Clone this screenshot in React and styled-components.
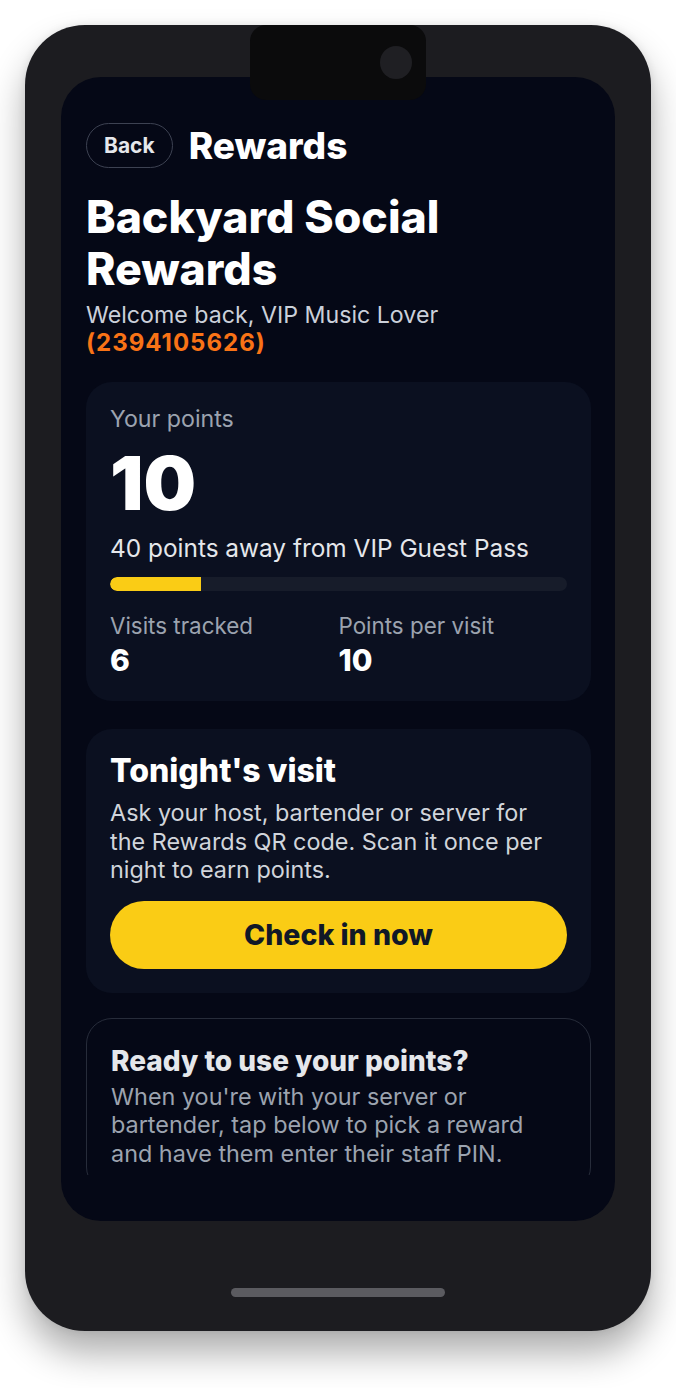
import React from "react"
import styled, { createGlobalStyle } from "styled-components"

const GlobalStyle = createGlobalStyle`
  html, body {
    margin: 0;
    padding: 0;
    background: #ffffff;
  }
  body {
    font-family: Inter, "Noto Sans", "Liberation Sans", sans-serif;
  }
  * {
    box-sizing: border-box;
  }
`

const Stage = styled.div`
  width: 676px;
  height: 1388px;
  padding: 25px;
`
const Frame = styled.div`
  position: relative;
  width: 626px;
  height: 1306px;
  background: #1c1c20;
  border-radius: 60px;
  padding: 52px 36px 0;
  display: flex;
  flex-direction: column;
  box-shadow: 0 22px 36px rgba(0, 0, 0, 0.32), 0 0 8px rgba(0, 0, 0, 0.08);
`
const Notch = styled.div`
  position: absolute;
  top: 0;
  left: 225px;
  width: 176px;
  height: 75px;
  background: #0b0b0c;
  border-radius: 16px;
  z-index: 2;
`
const Camera = styled.div`
  position: absolute;
  top: 21px;
  right: 14px;
  width: 32px;
  height: 33px;
  border-radius: 50%;
  background: #1f1f23;
`
const Screen = styled.div`
  height: 1144px;
  background: #050816;
  border-radius: 40px;
  padding-bottom: 46px;
  display: flex;
  flex-direction: column;
  overflow: hidden;
`
const Scroll = styled.div`
  flex: 1;
  overflow: hidden;
  padding: 46px 24px 0 25px;
  display: flex;
  flex-direction: column;
`
const HomeArea = styled.div`
  flex: 1;
  display: flex;
  justify-content: center;
  padding-top: 67px;
`
const HomeBar = styled.div`
  width: 214px;
  height: 9px;
  border-radius: 5px;
  background: #5b5b60;
`

const TopBar = styled.div`
  display: flex;
  align-items: center;
  gap: 16px;
`
const BackButton = styled.button`
  height: 45px;
  padding: 0 17px;
  border: 1.5px solid #3d4252;
  border-radius: 999px;
  background: transparent;
  color: #e5e7eb;
  font-family: inherit;
  font-size: 21px;
  font-weight: 700;
`
const PageTitle = styled.h1`
  margin: 0;
  font-size: 37px;
  line-height: 45px;
  font-weight: 800;
  color: #ffffff;
`
const Heading = styled.h2`
  margin: 23px 0 0;
  font-size: 44.6px;
  line-height: 52px;
  font-weight: 800;
  color: #ffffff;
`
const Welcome = styled.p`
  margin: 6px 0 0;
  font-size: 23.2px;
  line-height: 28px;
  color: #cbd0da;
`
const Member = styled.span`
  display: block;
  color: #f97316;
  font-size: 24px;
  font-weight: 700;
  letter-spacing: 1px;
`

const Card = styled.section`
  margin-top: ${({ $gap }) => $gap}px;
  padding: 24px;
  border-radius: 26px;
  background: ${({ $outline }) => ($outline ? "transparent" : "#0b1020")};
  border: ${({ $outline }) => ($outline ? "1px solid #272c3a" : "none")};
  flex-shrink: 0;
`
const Label = styled.div`
  font-size: 23.2px;
  line-height: 26px;
  color: #9ca3af;
`
const BigPoints = styled.div`
  margin-top: 17px;
  font-size: 74px;
  line-height: 68px;
  font-weight: 900;
  color: #ffffff;
`
const Goal = styled.div`
  margin-top: 17px;
  font-size: 24.4px;
  line-height: 28px;
  color: #e5e7eb;
`
const Track = styled.div`
  margin-top: 15px;
  height: 14px;
  border-radius: 7px;
  background: #171c2a;
  overflow: hidden;
`
const Fill = styled.div`
  height: 100%;
  background: #facc15;
  border-radius: 7px 0 0 7px;
`
const Stats = styled.div`
  margin-top: 21px;
  display: grid;
  grid-template-columns: 1fr 1fr;
`
const StatLabel = styled.div`
  font-size: 22.4px;
  line-height: 28px;
  color: #9ca3af;
`
const StatValue = styled.div`
  margin-top: 3px;
  font-size: 30px;
  line-height: 34px;
  font-weight: 800;
  color: #ffffff;
`
const CardTitle = styled.h3`
  margin: 0;
  font-size: ${({ $size }) => $size}px;
  line-height: 36px;
  font-weight: 800;
  color: ${({ $dim }) => ($dim ? "#e5e7eb" : "#ffffff")};
`
const Body = styled.p`
  margin: ${({ $top }) => $top}px 0 0;
  font-size: ${({ $size }) => $size}px;
  line-height: 28.5px;
  color: ${({ $muted }) => ($muted ? "#9ca3af" : "#d1d5db")};
`
const PrimaryButton = styled.button`
  display: block;
  width: 100%;
  height: 68px;
  margin-top: 16px;
  border: none;
  border-radius: 999px;
  background: #facc15;
  color: #111827;
  font-family: inherit;
  font-size: 28.5px;
  font-weight: 800;
`

const stats = [
  { label: "Visits tracked", value: 6 },
  { label: "Points per visit", value: 10 },
]

const App = () => {
  const points = 10
  const target = 50
  return (
    <>
      <GlobalStyle />
      <Stage>
        <Frame>
          <Notch>
            <Camera />
          </Notch>
          <Screen>
            <Scroll>
              <TopBar>
                <BackButton>Back</BackButton>
                <PageTitle>Rewards</PageTitle>
              </TopBar>
              <Heading>
                Backyard Social
                <br />
                Rewards
              </Heading>
              <Welcome>
                Welcome back, VIP Music Lover
                <Member>(2394105626)</Member>
              </Welcome>

              <Card $gap={25}>
                <Label>Your points</Label>
                <BigPoints>{points}</BigPoints>
                <Goal>{target - points} points away from VIP Guest Pass</Goal>
                <Track>
                  <Fill style={{ width: `${(points / target) * 100}%` }} />
                </Track>
                <Stats>
                  {stats.map((s) => (
                    <div key={s.label}>
                      <StatLabel>{s.label}</StatLabel>
                      <StatValue>{s.value}</StatValue>
                    </div>
                  ))}
                </Stats>
              </Card>

              <Card $gap={28}>
                <CardTitle $size={32}>Tonight's visit</CardTitle>
                <Body $top={10} $size={23.4}>
                  Ask your host, bartender or server for the Rewards QR code.
                  Scan it once per night to earn points.
                </Body>
                <PrimaryButton>Check in now</PrimaryButton>
              </Card>

              <Card $gap={25} $outline>
                <CardTitle $size={28} $dim>
                  Ready to use your points?
                </CardTitle>
                <Body $top={4} $size={23.4} $muted>
                  When you're with your server or bartender, tap below to pick
                  a reward and have them enter their staff PIN.
                </Body>
              </Card>
            </Scroll>
          </Screen>
          <HomeArea>
            <HomeBar />
          </HomeArea>
        </Frame>
      </Stage>
    </>
  )
}

export default App
